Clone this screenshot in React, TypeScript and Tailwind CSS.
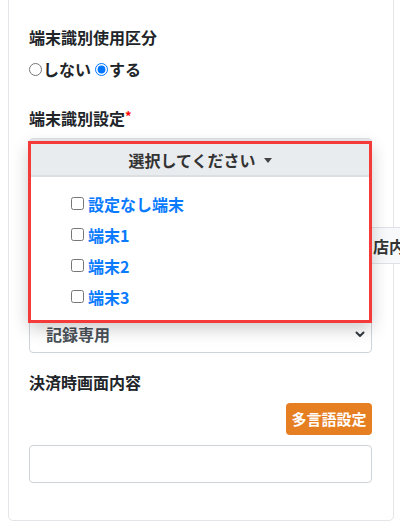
import React from "react";

const font = { fontFamily: '"Noto Sans CJK JP", "Noto Sans", sans-serif' };

export default function App() {
  return (
    <div className="relative w-[400px] h-[524px] overflow-hidden bg-white pl-2 pr-[6px]" style={font}>
      <div className="-mt-[6px] rounded-[5px] border border-[#e3e5e8] bg-white px-5 pt-[30px] pb-[37px] pr-[20px]">
        <div className="h-6 text-[16px] leading-6 font-bold text-[#212529]">端末識別使用区分</div>
        <div className="mt-2 flex h-6 items-center text-[16px] font-bold text-[#212529]">
          <input type="radio" name="r" className="h-[13px] w-[13px]" />
          <span className="ml-px">しない</span>
          <input type="radio" name="r" defaultChecked className="ml-[4px] h-[13px] w-[13px]" />
          <span className="ml-px">する</span>
        </div>
        <div className="mt-[25px] h-6 text-[16px] leading-6 font-bold text-[#212529]">
          端末識別設定<span className="relative -top-[4px] text-[13px] text-[#ff0000]">*</span>
        </div>
        <div className="mt-2 h-[38px] w-[343px] rounded-[4px] border border-[#dee2e6] bg-[#e9ecef]" />
        <div className="mt-[51px] flex h-[37px]">
          <div className="ml-[271px] flex h-[37px] w-[130px] shrink-0 items-center rounded-[4px] border border-[#dee2e6] bg-[#f8f9fa] pl-[72px] text-[16px] font-bold text-[#333] whitespace-nowrap">
            店内飲食
          </div>
        </div>
        <div className="mt-[51px] flex h-[38px] w-[343px] items-center justify-between rounded-[4px] border border-[#ced4da] bg-white pl-4 pr-[5px]">
          <span className="text-[16px] font-bold text-[#495057]">記録専用</span>
          <svg width="12" height="12" viewBox="0 0 12 12" className="text-[#343a40]">
            <path d="M2.5 4.5 L6 8 L9.5 4.5" fill="none" stroke="currentColor" strokeWidth="2" strokeLinecap="round" strokeLinejoin="round" />
          </svg>
        </div>
        <div className="mt-[17px] h-6 text-[16px] leading-6 font-bold text-[#212529]">決済時画面内容</div>
        <div className="mt-[9px] flex w-[343px] justify-end">
          <button className="flex h-[32px] w-[86px] items-center justify-center rounded-[4px] bg-[#e67e22] text-[15px] font-bold text-white">
            多言語設定
          </button>
        </div>
        <div className="mt-[10px] h-[38px] w-[343px] rounded-[4px] border border-[#ced4da] bg-white" />
      </div>

      <div className="absolute left-[28px] top-[141px] h-[182px] w-[344px] border-[3px] border-[#f53a3a] bg-white shadow-[0_6px_16px_rgba(0,0,0,0.2)]">
        <div className="flex h-[33px] items-center justify-center bg-[#e9ecef] text-[16px] font-bold text-[#333] border-b-2 border-[#dcdfe2]">
          選択してください
          <span className="ml-[8px] mt-[2px] h-0 w-0 border-x-[4px] border-t-[5px] border-x-transparent border-t-[#444]" />
        </div>
        <div className="pt-[11px] pl-[40px]">
          {["設定なし端末", "端末1", "端末2", "端末3"].map((t) => (
            <div key={t} className="flex h-[31px] items-center">
              <input type="checkbox" className="h-[13px] w-[13px]" />
              <span className="ml-[4px] text-[16px] font-bold text-[#0a7bff]">{t}</span>
            </div>
          ))}
        </div>
      </div>
    </div>
  );
}
